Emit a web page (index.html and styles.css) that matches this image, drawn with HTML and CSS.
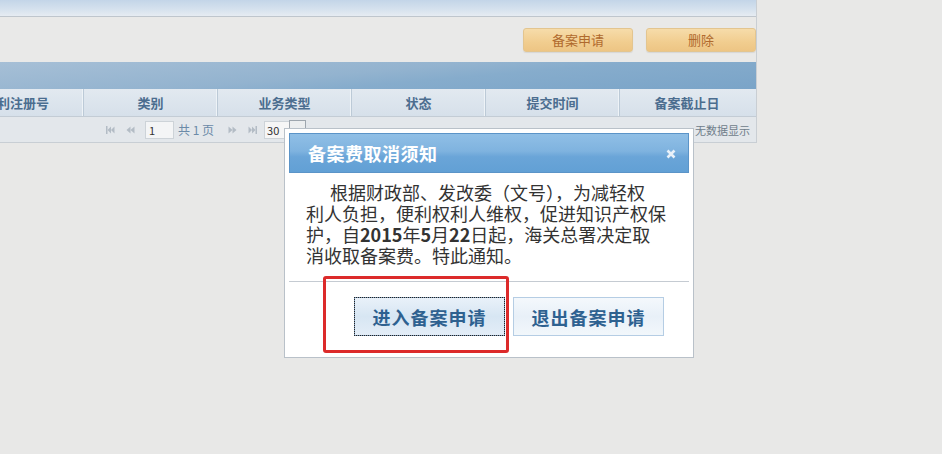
FILE: index.html
```html
<!DOCTYPE html>
<html lang="zh-CN">
<head>
<meta charset="utf-8">
<title>备案费取消须知</title>
<link rel="stylesheet" href="styles.css">
</head>
<body>
<div class="page">
  <div class="panel">
    <div class="topbar"></div>
    <div class="toolbar">
      <button class="tbtn">备案申请</button>
      <button class="tbtn">删除</button>
    </div>
    <div class="band"></div>
    <div class="thead">
      <div class="th th-first">专利注册号</div>
      <div class="th">类别</div>
      <div class="th">业务类型</div>
      <div class="th">状态</div>
      <div class="th">提交时间</div>
      <div class="th th-last">备案截止日</div>
    </div>
    <div class="pager">
      <svg class="picon picon-first" width="9" height="8" viewBox="0 0 9 8"><rect x="0" y="0" width="1.5" height="8"/><path d="M1.5 4 L5 0.5 L5 7.5Z"/><path d="M5 4 L8.5 0.5 L8.5 7.5Z"/></svg>
      <svg class="picon" width="9" height="8" viewBox="0 0 9 8"><path d="M0.5 4 L4.5 0.5 L4.5 7.5Z"/><path d="M4.5 4 L8.5 0.5 L8.5 7.5Z"/></svg>
      <span class="pinput">1</span>
      <span class="ptext">共 1 页</span>
      <svg class="picon picon-next" width="9" height="8" viewBox="0 0 9 8"><path d="M8.5 4 L4.5 0.5 L4.5 7.5Z"/><path d="M4.5 4 L0.5 0.5 L0.5 7.5Z"/></svg>
      <svg class="picon" width="9" height="8" viewBox="0 0 9 8"><path d="M7.5 4 L4 0.5 L4 7.5Z"/><path d="M4 4 L0.5 0.5 L0.5 7.5Z"/><rect x="7.5" y="0" width="1.5" height="8"/></svg>
      <span class="psize">30</span><span class="parrow"></span>
      <span class="pempty">无数据显示</span>
    </div>
  </div>

  <div class="dialog">
    <div class="dlg-head">
      <span class="dlg-title">备案费取消须知</span>
      <svg class="dlg-close" width="10" height="10" viewBox="0 0 10 10"><path d="M1.5 1.5 L8.5 8.5 M8.5 1.5 L1.5 8.5"/></svg>
    </div>
    <div class="dlg-body">
      <p class="notice">根据财政部、发改委（文号），为减轻权<br>利人负担，便利权利人维权，促进知识产权保<br>护，自<strong>2015</strong>年<strong>5</strong>月<strong>22</strong>日起，海关总署决定取<br>消收取备案费。特此通知。</p>
    </div>
    <div class="dlg-actions">
      <button class="dbtn dbtn-focus">进入备案申请</button>
      <button class="dbtn">退出备案申请</button>
    </div>
  </div>
  <div class="mark"></div>
</div>
</body>
</html>
```

FILE: styles.css
```css
html, body {
  margin: 0;
  padding: 0;
}
body {
  width: 942px;
  height: 454px;
  overflow: hidden;
  background: #e8e8e7;
  font-family: "Noto Sans CJK SC", "Noto Sans", sans-serif;
}
.page {
  position: relative;
  width: 942px;
  height: 454px;
}
.panel {
  width: 757px;
  box-sizing: border-box;
  border-right: 1px solid #c9ced3;
  overflow: hidden;
}
.topbar {
  height: 16px;
  border-bottom: 1px solid #bfc6cd;
  background: linear-gradient(#c3d5e8, #d6e2ee 60%, #e6ecf2);
}
.toolbar {
  height: 45px;
  box-sizing: border-box;
  padding-top: 11px;
  display: flex;
  justify-content: flex-end;
  align-items: flex-start;
  gap: 13px;
  background: #e9e9e8;
}
.tbtn {
  width: 110px;
  height: 24px;
  border: 1px solid #e3c58f;
  border-radius: 3px;
  background: linear-gradient(#f6dcaa, #f1cd8f 60%, #edc584);
  color: #b06a2e;
  font-family: inherit;
  font-size: 13px;
  line-height: 22px;
  padding: 0;
  box-shadow: 0 1px 1px rgba(0,0,0,0.08);
}
.band {
  height: 27px;
  background: linear-gradient(175deg, #a6bfd6 0%, #93b3cf 45%, #86accc 60%, #7aa4c8 100%);
}
.thead {
  height: 28px;
  box-sizing: border-box;
  display: flex;
  background: linear-gradient(#e2e9f0, #d6e0ea);
  border-bottom: 1px solid #c3ccd5;
}
.th {
  flex: 0 0 134px;
  box-sizing: border-box;
  border-right: 1px solid #bccad7;
  box-shadow: inset -1px 0 0 #eef3f7;
  text-align: center;
  line-height: 27px;
  font-size: 13px;
  font-weight: bold;
  color: #4b6d8f;
}
.th-first {
  margin-left: -50px;
}
.th-last {
  border-right: none;
  box-shadow: none;
}
.pager {
  height: 26px;
  box-sizing: border-box;
  border-bottom: 1px solid #c8ced4;
  background: #e3e7eb;
  display: flex;
  align-items: center;
  font-size: 12px;
  color: #6b8aa8;
}
.picon {
  fill: #b3bcc5;
  margin-left: 11px;
  flex: none;
}
.picon-first {
  margin-left: 106px;
}
.picon-next {
  margin-left: 14px;
}
.pinput {
  margin-left: 10px;
  width: 29px;
  height: 18px;
  box-sizing: border-box;
  border: 1px solid #cdd3d8;
  background: #f4f5f6;
  font-size: 11px;
  line-height: 16px;
  padding-left: 3px;
  color: #333;
}
.ptext {
  margin-left: 4px;
  font-size: 12px;
}
.psize {
  margin-left: 7px;
  width: 25px;
  height: 18px;
  box-sizing: border-box;
  border: 1px solid #cdd3d8;
  border-right: none;
  background: #f6f6f6;
  font-size: 11px;
  line-height: 17px;
  padding-left: 2px;
  color: #333;
}
.parrow {
  width: 17px;
  height: 18px;
  box-sizing: border-box;
  border: 1px solid #9ea6ae;
  background: #eceeef;
  align-self: center;
  margin-top: -2px;
}
.pempty {
  margin-left: auto;
  margin-right: 6px;
  font-size: 11px;
  color: #6f7d8a;
}

.dialog {
  position: absolute;
  left: 284px;
  top: 128px;
  width: 410px;
  box-sizing: border-box;
  border: 1px solid #b9c1c9;
  padding: 4px;
  background: #fff;
}
.dlg-head {
  height: 40px;
  box-sizing: border-box;
  border: 1px solid #5b94c8;
  background: linear-gradient(#90bfe6, #7fb3df 45%, #6aa5d8 60%, #62a0d5);
  display: flex;
  align-items: center;
  justify-content: space-between;
  padding: 0 12px 0 18px;
}
.dlg-title {
  color: #fff;
  font-size: 18px;
  font-weight: bold;
  letter-spacing: 0.5px;
}
.dlg-close {
  stroke: #e9f1f9;
  stroke-width: 2.6;
  fill: none;
  margin-top: 2px;
}
.dlg-body {
  padding: 9px 0 15px 17px;
  border-bottom: 1px solid #c5cbd2;
}
.notice {
  margin: 0;
  font-size: 18px;
  line-height: 21px;
  color: #333;
  text-indent: 24px;
  white-space: nowrap;
}
.notice strong {
  font-weight: bold;
}
.dlg-actions {
  display: flex;
  gap: 8px;
  padding: 15px 0 17px 65px;
}
.dbtn {
  width: 151px;
  height: 39px;
  box-sizing: border-box;
  border: 1px solid #b5cde4;
  background: linear-gradient(#f4f8fc, #e8f0f8 50%, #f2f7fb);
  color: #2e6190;
  font-family: inherit;
  font-size: 18px;
  font-weight: bold;
  letter-spacing: 1px;
  padding: 0;
}
.dbtn-focus {
  border-color: #7f9cba;
  background: linear-gradient(#e9f1f9, #d7e6f3 50%, #e3edf7);
  outline: 1px dotted #222;
  outline-offset: -1px;
}
.mark {
  position: absolute;
  left: 323px;
  top: 276px;
  width: 186px;
  height: 77px;
  box-sizing: border-box;
  border: 3px solid #dc2a2a;
  border-radius: 3px;
}
```
